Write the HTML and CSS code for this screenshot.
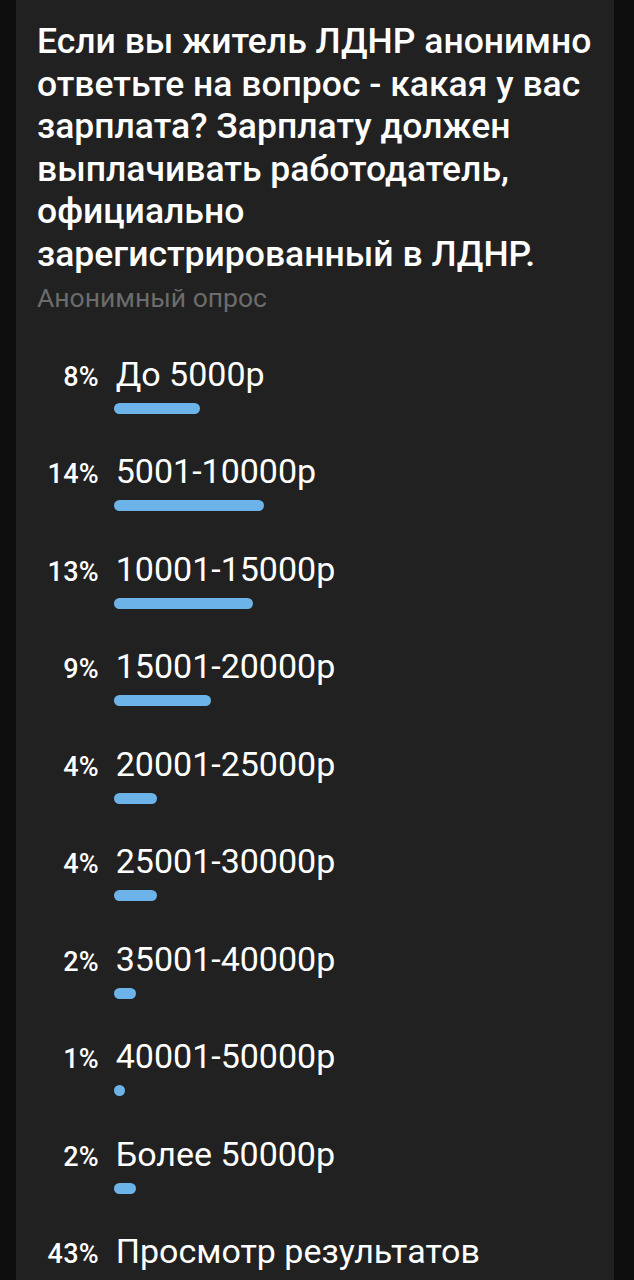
FILE: index.html
```html
<!DOCTYPE html>
<html lang="ru">
<head>
<meta charset="utf-8">
<link rel="stylesheet" href="styles.css">
</head>
<body>
<div class="card">
  <h1 class="title">Если вы житель ЛДНР анонимно ответьте на вопрос - какая у вас зарплата? Зарплату должен выплачивать работодатель, официально зарегистрированный в ЛДНР.</h1>
  <div class="subtitle">Анонимный опрос</div>
  <div class="options">
    <div class="option"><div class="line"><span class="pct">8%</span><span class="label">До 5000р</span></div><div class="bar" style="width:86px"></div></div>
    <div class="option"><div class="line"><span class="pct">14%</span><span class="label">5001-10000р</span></div><div class="bar" style="width:150px"></div></div>
    <div class="option"><div class="line"><span class="pct">13%</span><span class="label">10001-15000р</span></div><div class="bar" style="width:139px"></div></div>
    <div class="option"><div class="line"><span class="pct">9%</span><span class="label">15001-20000р</span></div><div class="bar" style="width:97px"></div></div>
    <div class="option"><div class="line"><span class="pct">4%</span><span class="label">20001-25000р</span></div><div class="bar" style="width:43px"></div></div>
    <div class="option"><div class="line"><span class="pct">4%</span><span class="label">25001-30000р</span></div><div class="bar" style="width:43px"></div></div>
    <div class="option"><div class="line"><span class="pct">2%</span><span class="label">35001-40000р</span></div><div class="bar" style="width:22px"></div></div>
    <div class="option"><div class="line"><span class="pct">1%</span><span class="label">40001-50000р</span></div><div class="bar" style="width:11px"></div></div>
    <div class="option"><div class="line"><span class="pct">2%</span><span class="label">Более 50000р</span></div><div class="bar" style="width:22px"></div></div>
    <div class="option"><div class="line"><span class="pct">43%</span><span class="label">Просмотр результатов</span></div><div class="bar" style="width:460px"></div></div>
  </div>
</div>
</body>
</html>
```

FILE: styles.css
```css
html, body {
  margin: 0;
  padding: 0;
  background: #0e0e0e;
  height: 1280px;
  overflow: hidden;
}
.card {
  margin-left: 16px;
  width: 598px;
  min-height: 1280px;
  background: #212121;
  box-sizing: border-box;
  padding: 20px 20px 0 21px;
  font-family: Roboto, "Noto Sans", sans-serif;
  color: #ffffff;
}
.title {
  margin: 0;
  font-size: 35.5px;
  font-weight: 500;
  line-height: 42.6px;
}
.subtitle {
  margin-top: 7px;
  font-size: 26.5px;
  line-height: 30px;
  color: #6c6c6c;
}
.options {
  margin-top: 41px;
  margin-left: -21px;
}
.option {
  height: 97.5px;
  display: flex;
  flex-direction: column;
}
.line {
  display: flex;
  align-items: baseline;
  height: 40px;
  line-height: 40px;
}
.pct {
  width: 83px;
  text-align: right;
  font-size: 27px;
  font-weight: 500;
  letter-spacing: 0.3px;
  margin-right: -0.3px;
}
.label {
  margin-left: 17px;
  font-size: 34px;
}
.bar {
  margin-top: 9px;
  margin-left: 98px;
  height: 11px;
  border-radius: 6px;
  background: #6cb3ea;
}
```
